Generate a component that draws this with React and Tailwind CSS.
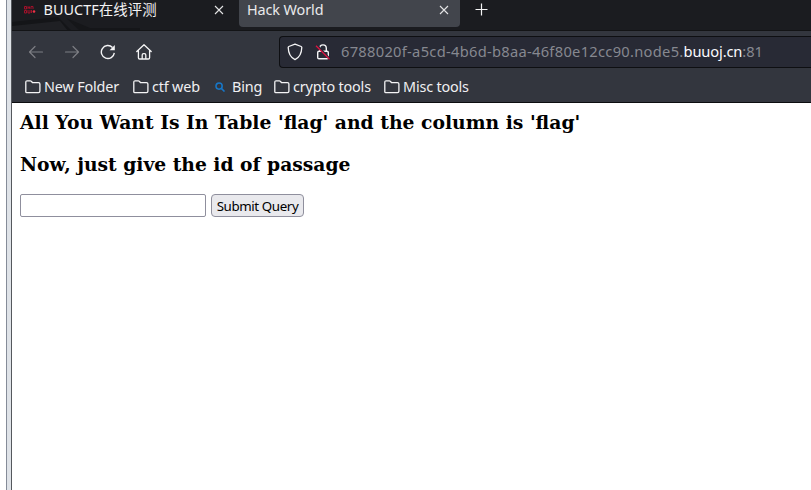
import React from "react";

const Folder = () => (
  <svg className="shrink-0" width="16" height="14" viewBox="0 0 16 14" fill="none" stroke="#f4f4f5" strokeWidth="1.3" strokeLinejoin="round">
    <path d="M.8 11.7V2.2Q.8.8 2.2.8h3.1q.6 0 1 .5L7.600 2.700h5.900q1.400 0 1.400 1.400v7.200q0 1.400-1.400 1.400H1.800q-1 0-1-1z" />
  </svg>
);

const Close = ({ color }) => (
  <svg className="shrink-0" width="10" height="10" viewBox="0 0 10 10" fill="none" stroke={color} strokeWidth="1.1">
    <path d="M1 1l8 8M9 1L1 9" />
  </svg>
);

const Arrow = ({ flip }) => (
  <svg className={flip ? "shrink-0 -scale-x-100" : "shrink-0"} width="16" height="14" viewBox="0 0 16 14" fill="none" stroke="#7d7e83" strokeWidth="1.2" strokeLinecap="round" strokeLinejoin="round">
    <path d="M1.500 7H14.500M7 1.500L1.500 7L7 12.500" />
  </svg>
);

function Tabs() {
  return (
    <div className="relative flex h-[31px] overflow-hidden border-b border-[#131416] bg-[#1b1c20] text-[14.400px]">
      <svg className="absolute left-0 top-0" width="140" height="31" viewBox="0 0 140 31">
        <path d="M0 22L46 17L60 31H0z" fill="#141518" />
        <path d="M0 26L48 21L56 31H0z" fill="#1f2024" />
        <path d="M54 18l24 10h50v3H68z" fill="#151619" />
      </svg>
      <div className="relative flex h-[19px] w-[227px] items-center pl-3">
        <svg className="shrink-0" width="12" height="8" viewBox="0 0 12 8" fill="none" stroke="#a3102a" strokeWidth="1">
          <path d="M.5 3V.5h2V3H.5M4 3V.5l1.500 2V.5M7 3V.5h2V3M.5 4.500h2V7h-2zM4 4v3h2V4M7.500 4v3" />
          <circle cx="10" cy="5.500" r="1.300" fill="#ee3145" stroke="none" />
        </svg>
        <span className="ml-[7.500px] w-[170.500px] whitespace-nowrap tracking-[0.060px] text-[#f3f3f4]">BUUCTF在线评测</span>
        <Close color="#e4e4e6" />
      </div>
      <div className="relative flex h-[27px] w-[221px] rounded-b bg-[#42454c] pl-2 pr-[11px]">
        <div className="flex h-[19px] w-full items-center justify-between">
          <span className="tracking-[-0.1px] text-[#e9e9eb]">Hack World</span>
          <Close color="#e4e4e6" />
        </div>
      </div>
      <svg className="ml-[15px] mt-[3px]" width="13" height="13" viewBox="0 0 13 13" stroke="#f4f4f5" strokeWidth="1.200">
        <path d="M6.500 .5v12M.5 6.500h12" />
      </svg>
    </div>
  );
}

function Toolbar() {
  return (
    <div className="flex h-[41px] items-center">
      <div className="flex w-[267px] items-center pl-4">
        <Arrow />
        <span className="w-5" />
        <Arrow flip />
        <svg className="ml-5 shrink-0" width="16" height="16" viewBox="0 0 16 16" fill="none" stroke="#f4f4f5" strokeWidth="1.400">
          <path d="M14.300 8.800A6.500 6.500 0 1 1 12.500 3.500" />
          <path d="M14.800 1v5.200H9.600z" fill="#f4f4f5" stroke="none" />
        </svg>
        <svg className="ml-[19.500px] shrink-0" width="16" height="16" viewBox="0 0 16 16" fill="none" stroke="#f4f4f5" strokeWidth="1.300" strokeLinejoin="round" strokeLinecap="round">
          <path d="M.8 7.500L8 .8l7.200 6.700M2.400 6.500v7.200q0 1.300 1.300 1.300h8.600q1.300 0 1.300-1.300V6.500M6.200 15v-4q0-1.300 1.300-1.300h1q1.300 0 1.300 1.300v4" />
        </svg>
      </div>
      <div className="flex h-8 flex-1 items-center rounded-l border border-r-0 border-[#0e0f12] bg-[#282a35] pl-[7px]">
        <svg className="shrink-0" width="16" height="18" viewBox="0 0 16 18" fill="none" stroke="#f4f4f5" strokeWidth="1.300" strokeLinejoin="round">
          <path d="M8 1.200l6.200 2.300q.6.300.6 1C14.600 10.500 12.500 14.500 8 16.600C3.500 14.500 1.400 10.500 1.200 4.500q0-.7.600-1z" />
        </svg>
        <svg className="ml-3 shrink-0" width="16" height="18" viewBox="0 0 16 18" fill="none" stroke="#f4f4f5" strokeWidth="1.400">
          <rect x="2.700" y="8.300" width="10.600" height="7.400" rx="1.300" />
          <path d="M4.700 8V5.200a3.300 3.300 0 0 1 6.600 0V8" />
          <path d="M2 2.500l12.800 13.500" stroke="#282a35" strokeWidth="2.400" />
          <path d="M1 2.800l13.500 13.500" stroke="#df1443" strokeWidth="1.300" />
        </svg>
        <span className="ml-[10px] whitespace-nowrap text-[14.700px] text-[#868890]">
          <span className="tracking-[0.280px]">6788020f-a5cd-4b6d-b8aa-46f80e12cc90.node5.</span>
          <span className="tracking-[-0.150px] text-[#fbfbfe]">buuoj.cn</span>:81
        </span>
      </div>
    </div>
  );
}

function Bookmark({ width, label, search }) {
  return (
    <div className={`flex shrink-0 items-center ${width}`}>
      {search ? (
        <svg className="mr-[7px] shrink-0" width="10" height="10" viewBox="0 0 11 11" fill="none" stroke="#1777c8" strokeWidth="1.700">
          <circle cx="4.500" cy="4.500" r="3.400" />
          <path d="M7 7l3.500 3.500" />
        </svg>
      ) : (
        <span className="mr-[3px]"><Folder /></span>
      )}
      <span className="whitespace-nowrap">{label}</span>
    </div>
  );
}

export default function App() {
  return (
    <div className="flex h-[490px] w-[811px] overflow-hidden bg-white font-['Noto_Sans','Noto_Sans_CJK_SC',sans-serif]">
      <div className="ml-1.5 w-1.5 shrink-0 border-l border-r border-l-[#858c98] border-r-[#55585d] bg-[#dfe3e8]" />
      <div className="min-w-0 flex-1">
        <header className="h-[103px] border-b border-[#0c0d0f] bg-[#33363e]">
          <Tabs />
          <Toolbar />
          <div className="flex h-[30px] items-center pl-[13px] text-[14.400px] tracking-[-0.170px] text-[#f0f0f2]">
            <Bookmark width="w-[108px]" label="New Folder" />
            <Bookmark width="w-[82px]" label="ctf web" />
            <Bookmark width="w-[59px]" label="Bing" search />
            <Bookmark width="w-[110px]" label="crypto tools" />
            <Bookmark width="w-[110px]" label="Misc tools" />
          </div>
        </header>
        <main className="px-2 pt-2">
          <h3 className="font-['DejaVu_Serif',serif] text-[18.750px] font-bold leading-[23px] text-black">
            All You Want Is In Table 'flag' and the column is 'flag'
          </h3>
          <h3 className="mt-[19px] font-['DejaVu_Serif',serif] text-[18.720px] font-bold leading-[23px] text-black">
            Now, just give the id of passage
          </h3>
          <form className="mt-[18px] flex gap-[5px]">
            <input className="h-[23px] w-[186px] rounded-xs border border-[#8f8f9d] bg-white" />
            <button type="button" className="h-[23px] w-[93px] whitespace-nowrap rounded border border-[#8f8f9d] bg-[#e9e9ed] pt-px text-[13.333px] leading-[21px] tracking-[-0.400px] text-black">
              Submit Query
            </button>
          </form>
        </main>
      </div>
    </div>
  );
}
